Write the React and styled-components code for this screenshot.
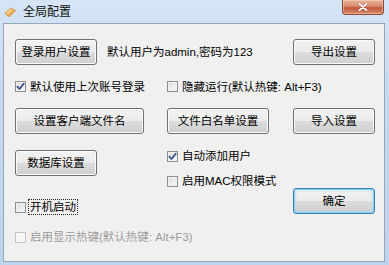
import React from 'react';
import styled, { createGlobalStyle, css } from 'styled-components';

const Global = createGlobalStyle`
  html, body { margin: 0; padding: 0; }
  body {
    width: 389px; height: 265px; overflow: hidden;
    font-family: "Liberation Sans", "Noto Sans CJK SC", sans-serif;
    color: #000;
  }
`;

const Window = styled.div`
  width: 389px; height: 265px; box-sizing: border-box;
  display: flex; flex-direction: column;
  padding: 0 4px 3px 3px;
  background: linear-gradient(180deg, #d5e5f6 0%, #c6daf0 35%, #bdd4ed 100%);
`;

const TitleBar = styled.div`
  height: 23px; flex: none;
  display: flex; align-items: center;
`;

const TitleIcon = styled.svg`
  width: 12px; height: 12px; margin-left: 1px; flex: none;
`;

const TitleText = styled.span`
  margin-left: 7px;
  font-size: 12px; line-height: 14px;
  color: #111;
`;

const CloseBtn = styled.div`
  margin-left: auto; margin-right: 1px; align-self: flex-start;
  width: 42px; height: 15px; box-sizing: border-box;
  border: 1px solid #8a4a3a; border-top: none;
  border-radius: 0 0 4px 4px;
  background: linear-gradient(180deg, #e9b6a0 0%, #d78a6c 45%, #c2583a 55%, #d98b6a 100%);
  box-shadow: inset 0 0 0 1px rgba(255,220,200,.45);
  display: flex; align-items: center; justify-content: center;
`;

const Panel = styled.div`
  flex: 1;
  box-sizing: border-box;
  border: 1px solid #97a6b9;
  background: #f0f0f0;
  padding: 15px 9px 0 11px;
`;

const TopGrid = styled.div`
  display: grid;
  grid-template-columns: 152px 126px 82px;
  grid-template-rows: 26px 17px 26px;
  row-gap: 13px;
`;

const BottomGrid = styled.div`
  display: grid;
  grid-template-columns: 152px 126px 82px;
  align-items: start;
  margin-top: 16px;
`;

const LoginRow = styled.div`
  grid-column: 1 / 3;
  display: flex; align-items: center;
`;

const InfoText = styled.span`
  margin-left: 10px;
  font-size: 11.5px; line-height: 14px; white-space: nowrap;
`;

const Button = styled.div`
  box-sizing: border-box;
  width: ${p => p.$w || 82}px; height: 26px;
  border: 1px solid #707070; border-radius: 3px;
  background: linear-gradient(180deg, #f3f3f3 0%, #ebebeb 48%, #dcdcdc 52%, #cfcfcf 100%);
  box-shadow: inset 0 0 0 1px #fbfbfb;
  display: flex; align-items: center; justify-content: center;
  font-size: 11.5px; line-height: 14px; white-space: nowrap;
  color: #000;
  ${p => p.$default && css`
    border-color: #3c7fb1;
    box-shadow: inset 0 0 0 1px #7fd3f6, inset 0 0 2px 2px rgba(150, 215, 245, .45);
  `}
`;

const Stack = styled.div`
  display: flex; flex-direction: column; align-items: flex-start;
  margin-top: ${p => p.$top || 0}px;
  gap: ${p => p.$gap || 0}px;
`;

const CheckRow = styled.label`
  display: flex; align-items: center;
  height: 16px;
  margin-top: ${p => p.$top || 0}px;
  align-self: ${p => p.$center ? 'center' : 'auto'};
`;

const Box = styled.span`
  box-sizing: border-box;
  width: 11px; height: 11px; flex: none;
  border: 1px solid ${p => p.$disabled ? '#c5c5c5' : '#8e8f8f'};
  background: ${p => p.$disabled
    ? '#f7f7f7'
    : 'linear-gradient(135deg, #d8d8d8 0%, #ececec 55%, #fafafa 100%)'};
  box-shadow: inset 0 0 0 1px ${p => p.$disabled ? '#f7f7f7' : '#f2f2f2'};
  display: flex; align-items: center; justify-content: center;
`;

const CheckText = styled.span`
  margin-left: ${p => p.$focus ? 2 : 4}px;
  font-size: 11.5px; line-height: 14px; white-space: nowrap;
  color: ${p => p.$disabled ? '#9c9c9c' : '#000'};
  ${p => p.$focus && css`
    border: 1px dotted #222;
    padding: 0 1px;
  `}
`;

const Check = () => (
  <svg width="9" height="9" viewBox="0 0 9 9">
    <path d="M1.3 4.6 L3.5 7 L7.8 1.6" fill="none" stroke="#3b5190" strokeWidth="1.7" strokeLinecap="round" strokeLinejoin="round" />
  </svg>
);

const CheckBox = ({ label, checked, disabled, focus, top, center }) => (
  <CheckRow $top={top} $center={center}>
    <Box $disabled={disabled}>{checked && <Check />}</Box>
    <CheckText $disabled={disabled} $focus={focus}>{label}</CheckText>
  </CheckRow>
);

export default function App() {
  return (
    <>
      <Global />
      <Window>
        <TitleBar>
          <TitleIcon viewBox="0 0 12 12">
            <defs>
              <linearGradient id="ti" x1="0" y1="0" x2="1" y2="1">
                <stop offset="0" stopColor="#fbe48a" />
                <stop offset="1" stopColor="#e38c2c" />
              </linearGradient>
            </defs>
            <path d="M1 7 L7 2 L11.5 4.5 L5.5 10.5 Z" fill="url(#ti)" stroke="#c7762a" strokeWidth="0.6" />
            <path d="M1 7 L5.5 10.5 L5.5 11.5 L1 8 Z" fill="#d9a050" />
            <path d="M3 7.2 L7.6 3.4" stroke="#fff6d0" strokeWidth="0.7" />
          </TitleIcon>
          <TitleText>全局配置</TitleText>
          <CloseBtn>
            <svg width="10" height="8" viewBox="0 0 10 8">
              <path d="M1.5 0.8 L8.5 7.2 M8.5 0.8 L1.5 7.2" stroke="#5a2418" strokeWidth="2.6" strokeLinecap="round" opacity="0.35" />
              <path d="M1.5 0.8 L8.5 7.2 M8.5 0.8 L1.5 7.2" stroke="#fff" strokeWidth="1.8" strokeLinecap="round" />
            </svg>
          </CloseBtn>
        </TitleBar>
        <Panel>
          <TopGrid>
            <LoginRow>
              <Button>登录用户设置</Button>
              <InfoText>默认用户为admin,密码为123</InfoText>
            </LoginRow>
            <Button style={{ gridColumn: 3 }}>导出设置</Button>
            <CheckBox label="默认使用上次账号登录" checked center />
            <CheckBox label="隐藏运行(默认热键: Alt+F3)" center />
            <span />
            <Button $w={129}>设置客户端文件名</Button>
            <Button $w={102}>文件白名单设置</Button>
            <Button>导入设置</Button>
          </TopGrid>
          <BottomGrid>
            <Stack>
              <Button>数据库设置</Button>
              <CheckBox label="开机启动" focus top={23} />
              <CheckBox label="启用显示热键(默认热键: Alt+F3)" disabled top={14} />
            </Stack>
            <Stack $top={-2} $gap={9}>
              <CheckBox label="自动添加用户" checked />
              <CheckBox label="启用MAC权限模式" />
            </Stack>
            <Stack $top={38}>
              <Button $default>确定</Button>
            </Stack>
          </BottomGrid>
        </Panel>
      </Window>
    </>
  );
}
